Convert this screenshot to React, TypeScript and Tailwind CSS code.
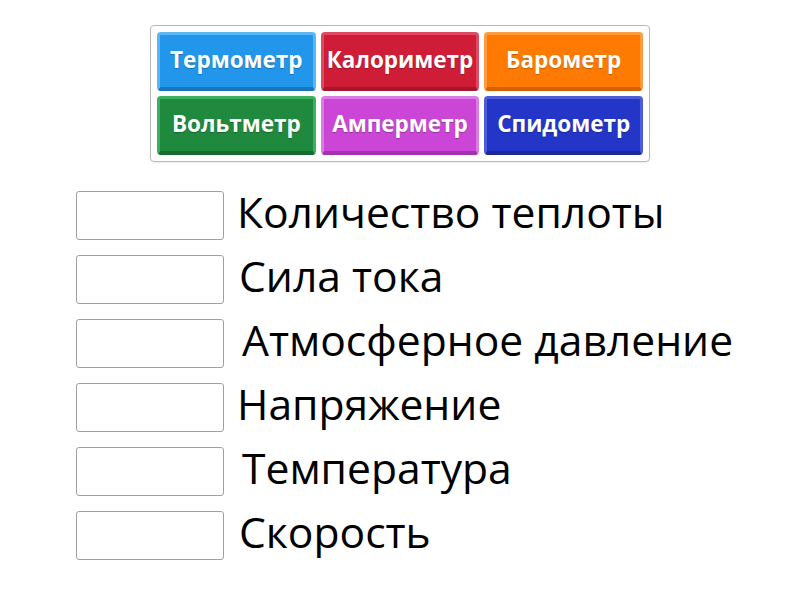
import React from "react";

const tiles = [
	{ label: "Термометр", cls: "bg-[#2196ea] border-[#5ab6f4] border-b-[#1675bd]" },
	{ label: "Калориметр", cls: "bg-[#d01d37] border-[#df4a60] border-b-[#a6172c]" },
	{ label: "Барометр", cls: "bg-[#ff7a00] border-[#ff9a3e] border-b-[#d66000]" },
	{ label: "Вольтметр", cls: "bg-[#1f8a3e] border-[#3bb060] border-b-[#166c30]" },
	{ label: "Амперметр", cls: "bg-[#cb45d6] border-[#db7be4] border-b-[#a42fb0]" },
	{ label: "Спидометр", cls: "bg-[#2336c8] border-[#4d5dd8] border-b-[#1a289a]" },
];

const rows = [
	{ text: "Количество теплоты", ml: "ml-[13px]" },
	{ text: "Сила тока", ml: "ml-[15px]" },
	{ text: "Атмосферное давление", ml: "ml-[18px]" },
	{ text: "Напряжение", ml: "ml-[13px]" },
	{ text: "Температура", ml: "ml-[18px]" },
	{ text: "Скорость", ml: "ml-[15px]" },
];

export default function App() {
	return (
		<div className="w-[800px] h-[600px] bg-white font-['Open_Sans',sans-serif] relative overflow-hidden">
			{/* Word bank */}
			<div className="pt-[25px] flex justify-center">
				<div className="border border-[#b8b8b8] rounded-[4px] p-[6px] w-[500px] shadow-[0_1px_2px_rgba(0,0,0,0.08)]">
					<div className="grid grid-cols-3 gap-x-[5px] gap-y-[5px]">
						{tiles.map((t) => (
							<div
								key={t.label}
								className={`h-[59px] rounded-[4px] border-[3px] border-b-[4px] flex items-center justify-center pb-[2px] text-white font-bold text-[22.5px] [text-shadow:0_1px_1px_rgba(0,0,0,0.25)] whitespace-nowrap ${t.cls}`}
							>
								{t.label}
							</div>
						))}
					</div>
				</div>
			</div>

			{/* Targets */}
			<div className="ml-[76px] mt-[29px] flex flex-col gap-[15px]">
				{rows.map((r) => (
					<div key={r.text} className="flex items-center h-[49px]">
						<div className="w-[148px] h-[49px] border border-[#a0a0a0] rounded-[3px] bg-white shrink-0" />
						<span className={`${r.ml} pb-[8px] text-[42.6px] leading-none text-black whitespace-nowrap`}>
							{r.text}
						</span>
					</div>
				))}
			</div>
		</div>
	);
}
